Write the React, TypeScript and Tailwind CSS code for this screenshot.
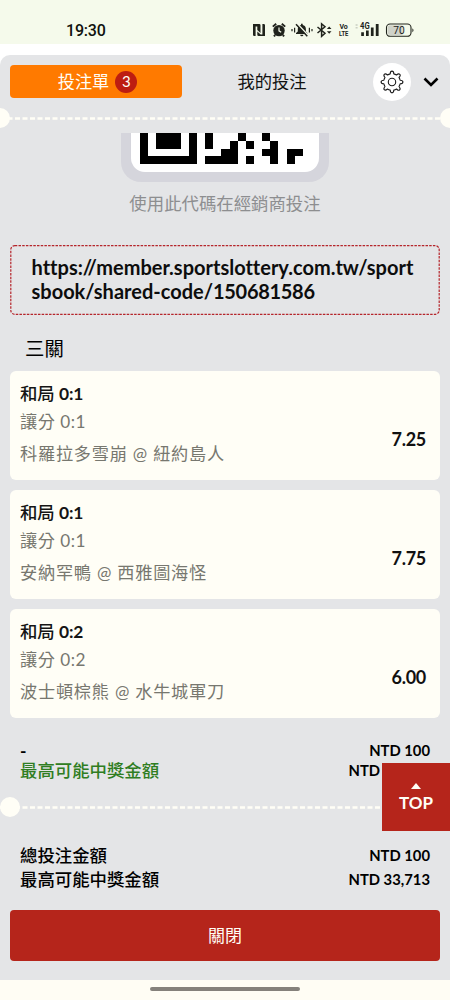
import { useState } from 'react'

interface Bet {
  id: number
  result: string
  score: string
  market: string
  match: string
  odds: string
}

const bets: Bet[] = [
  { id: 1, result: '和局', score: '0:1', market: '讓分 0:1', match: '科羅拉多雪崩 @ 紐約島人', odds: '7.25' },
  { id: 2, result: '和局', score: '0:1', market: '讓分 0:1', match: '安納罕鴨 @ 西雅圖海怪', odds: '7.75' },
  { id: 3, result: '和局', score: '0:2', market: '讓分 0:2', match: '波士頓棕熊 @ 水牛城軍刀', odds: '6.00' },
]

// last visible rows of the QR code, one character per module
const qrRows = [
  '#.###.#.#...#..#.....',
  '#.###.#.#..#.#..#....',
  '#.....#...##...##.##.',
  '#######.####.#..#.#..',
]

function StatusBar() {
  return (
    <div className="flex h-11 items-end justify-between bg-[#f5faeb] pl-[66px] pr-[35px] text-[#20231c]">
      <span className="mb-[1px] font-['Roboto'] text-[16px] font-medium leading-6 tracking-[-0.2px] text-[#10120e]">19:30</span>
      <svg width="163" height="20" viewBox="0 0 163 20" className="mb-[4px]" fill="currentColor">
        {/* nfc */}
        <path d="M1 4h6.2q1.3 0 1.3 1.3v7.6L5.3 9.9V6.4H3.6V16H2.3Q1 16 1 14.7zM13 16H6.6q-1.3 0-1.3-1.3v-3.2l3.4 2.9h1.7V4h1.3Q13 4 13 5.3z" />
        {/* alarm */}
        <circle cx="27" cy="10.6" r="5.7" />
        <path d="M20.8 6.6l3.4-2.9M33.2 6.6L29.8 3.7M23.2 15l-1.3 1.4M30.8 15l1.3 1.4" stroke="currentColor" strokeWidth="1.9" />
        <path d="M27 7.6v3.2l2.2 1.4" fill="none" stroke="#f5faeb" strokeWidth="1.2" />
        {/* muted bell */}
        <path d="M44 14h11.4v-1l-1.5-1.5V9c0-2.4-1.3-3.8-3.2-4.1V3.8H49v1.1c-1.9.3-3.2 1.7-3.2 4.1v2.5L44 13zM48.2 14.7h3.2a1.6 1.6 0 0 1-3.2 0z" />
        <path d="M45.2 3.8l11.3 12" stroke="#f5faeb" strokeWidth="1.8" />
        <path d="M44 4.2l11.3 12" stroke="currentColor" strokeWidth="1.5" />
        <path d="M40 9v2.2M42.6 7.8v4.6M57.4 7.8v4.6M60 9v2.2" stroke="currentColor" strokeWidth="1.2" />
        {/* bluetooth */}
        <path d="M65.5 7l7.5 6.3-3.4 3V3.8l3.4 3L65.5 13" fill="none" stroke="currentColor" strokeWidth="1.5" />
        <path d="M74.9 8.9l2.3-2.5 2.3 2.5zM74.9 11.2l2.3 2.5 2.3-2.5z" />
        <g fontFamily="Roboto" fontWeight="700">
          <text x="87.4" y="9.3" fontSize="7" textLength="8.4" lengthAdjust="spacingAndGlyphs">Vo</text>
          <text x="87" y="16.4" fontSize="7" textLength="9.4" lengthAdjust="spacingAndGlyphs">LTE</text>
          <text x="108" y="9.4" fontSize="8.4" textLength="9.6" lengthAdjust="spacingAndGlyphs">4G</text>
        </g>
        <path d="M103.6 4.2h2v1.5h-2zM103.6 6.9h2v1.5h-2z" opacity=".2" />
        <path d="M109.2 12.3h2.7V16h-2.7zM114 10.5h2.7V16H114zM118.9 7.5h2.7V16h-2.7zM123.8 4h2.8v12h-2.8z" />
        {/* battery */}
        <rect x="134.5" y="4" width="24.5" height="12.3" rx="3.6" fill="none" stroke="currentColor" strokeWidth="1.1" />
        <path d="M138.1 5.2h12.4v9.9h-12.4a2.5 2.5 0 0 1-2.5-2.5V7.7a2.5 2.5 0 0 1 2.5-2.5z" fill="#cfd2c9" />
        <path d="M160.4 8.2q2.2 2 0 4z" />
        <text x="147" y="13.8" textAnchor="middle" fontFamily="Roboto" fontSize="10.2">70</text>
      </svg>
    </div>
  )
}

function GearIcon() {
  return (
    <svg width="24" height="24" viewBox="0 0 24 24" fill="none" stroke="#1a1a1a" strokeWidth="1.1" strokeLinejoin="round">
      <path d="M10.2 3.9Q10.3 1.1 12 1.1T13.8 3.9Q15.3 4.2 16.5 5Q18.6 3.2 19.8 4.3T19 7.5Q19.8 8.7 20.1 10.2Q22.9 10.3 22.9 12T20.1 13.8Q19.8 15.3 19 16.5Q20.8 18.6 19.7 19.8T16.5 19Q15.3 19.8 13.8 20.1Q13.7 22.9 12 22.9T10.2 20.1Q8.7 19.8 7.5 19Q5.4 20.8 4.3 19.7T5 16.5Q4.2 15.3 3.9 13.8Q1.1 13.7 1.1 12T3.9 10.2Q4.2 8.7 5 7.5Q3.2 5.4 4.3 4.3T7.5 5Q8.7 4.2 10.2 3.9Z" />
      <circle cx="12" cy="12" r="3.7" />
    </svg>
  )
}

function DashedLine() {
  return (
    <svg width="100%" height="3">
      <line x1="0" y1="1.5" x2="100%" y2="1.5" stroke="#fffef6" strokeWidth="2.4" strokeDasharray="5 2.5" />
    </svg>
  )
}

function QrCode() {
  return (
    <div className="mx-auto h-[49px] w-[208px] rounded-b-[20px] bg-[#d5d5dc] px-[10px] pb-[10px]">
      <div className="h-full rounded-b-[14px] bg-white pl-[9px]">
        <svg width="171" height="31" viewBox="0 0 21 4" preserveAspectRatio="none" shapeRendering="crispEdges">
          {qrRows.map((row, y) =>
            row.split('').map((cell, x) =>
              cell === '#' ? <rect key={`${x}-${y}`} x={x} y={y} width="1" height="1" /> : null
            )
          )}
        </svg>
      </div>
    </div>
  )
}

function BetCard({ bet }: { bet: Bet }) {
  return (
    <div className="flex h-[109px] justify-between rounded-md bg-[#fffef6] pl-[10px] pr-[14px]">
      <div className="pt-[9px]">
        <p className="text-[17.4px] font-medium leading-7 tracking-[-0.1px] text-[#151515]">
          {bet.result} <span className="font-bold">{bet.score}</span>
        </p>
        <p className="text-[17.2px] leading-7 tracking-[0.5px] text-[#77776f]">{bet.market}</p>
        <p className="mt-1 text-[17.2px] leading-7 tracking-[0.76px] text-[#77776f]">{bet.match}</p>
      </div>
      <span className="mt-[56px] text-[18px] font-bold leading-6 tracking-[-0.3px] text-[#111]">{bet.odds}</span>
    </div>
  )
}

export default function App() {
  const [tab, setTab] = useState('slip')

  return (
    <div className="flex h-[1000px] w-[450px] flex-col overflow-hidden bg-white font-['Lato','Noto_Sans_CJK_TC',sans-serif] text-black">
      <StatusBar />

      <main className="mt-[11px] flex h-[925px] flex-col rounded-t-[10px] bg-[#e4e5e7]">
        <header className="flex h-[53px] items-center px-[10px]">
          <button
            onClick={() => setTab('slip')}
            aria-pressed={tab === 'slip'}
            className="flex h-[33px] w-[172px] items-center justify-center gap-[6px] rounded bg-[#ff7a00] pl-[3px] text-[17.2px] text-[#fffef6]"
          >
            <span>投注單</span>
            <span className="flex h-[22px] w-[22px] items-center justify-center rounded-full bg-[#bd1d11] text-[15px]">3</span>
          </button>
          <button
            onClick={() => setTab('mine')}
            aria-pressed={tab === 'mine'}
            className="w-[180px] text-center text-[17.3px] text-[#111]"
          >
            我的投注
          </button>
          <span className="ml-[11px] flex h-[38px] w-[38px] items-center justify-center rounded-full bg-white">
            <GearIcon />
          </span>
          <svg width="16" height="10" viewBox="0 0 16 10" fill="none" stroke="black" strokeWidth="2.6" className="ml-[12px]">
            <path d="M1.5 1.5L8 8l6.5-6.5" />
          </svg>
        </header>

        <div className="relative flex h-[20px] items-center">
          <DashedLine />
          <span className="absolute -left-[10px] top-0 h-5 w-5 rounded-full bg-[#fffef6]" />
          <span className="absolute -right-[10px] top-0 h-5 w-5 rounded-full bg-[#fffef6]" />
        </div>

        <section className="mt-[5px]">
          <QrCode />
          <p className="mt-[8px] text-center text-[17.4px] leading-7 text-[#8d8e90]">使用此代碼在經銷商投注</p>
        </section>

        <div className="relative mx-[10px] mt-[27px] h-[70px] break-all pl-[21.5px] pr-[20px] pt-[10px] text-[20px] font-bold leading-6 text-[#0d0d0d] [font-variant-ligatures:none]">
          <svg width="430" height="70" className="absolute left-0 top-0" fill="none">
            <rect x="0.8" y="0.7" width="428.4" height="68.6" rx="4" stroke="#b5252b" strokeWidth="1.2" strokeDasharray="2.5 1.2" />
          </svg>
          https://member.sportslottery.com.tw/sportsbook/shared-code/<span className="tracking-[-0.3px]">150681586</span>
        </div>

        <h2 className="ml-[25px] mt-[19px] text-[19.4px] leading-[30px]">三關</h2>

        <section className="mx-[10px] mt-[7px] flex flex-col gap-[10px]">
          {bets.map((bet) => (
            <BetCard key={bet.id} bet={bet} />
          ))}
        </section>

        <div className="mt-[22px] flex h-10 justify-between px-5 font-medium leading-5">
          <div className="pt-px text-[17.4px]">
            <p className="font-bold">-</p>
            <p className="text-[#2f7d22]">最高可能中獎金額</p>
          </div>
          <div className="text-right text-[14.8px] font-bold">
            <p>NTD 100</p>
            <p>NTD 33,713</p>
          </div>
        </div>

        <div className="relative mt-[17px] flex h-5 items-center">
          <DashedLine />
          <span className="absolute left-0 top-0 h-5 w-5 rounded-full bg-[#fffef6]" />
          <button className="absolute -top-[34px] right-0 flex h-[68px] w-[68px] flex-col items-center bg-[#b5251b] pt-[20px] text-[17px] font-bold text-[#fffef6]">
            <svg width="10" height="6" viewBox="0 0 10 6" fill="currentColor">
              <path d="M5 0l5 6H0z" />
            </svg>
            <span className="mt-[4px] leading-5">TOP</span>
          </button>
        </div>

        <div className="mt-[26px] flex flex-col px-5 font-medium leading-6">
          <div className="flex justify-between">
            <span className="pt-px text-[17.4px] leading-[23px]">總投注金額</span>
            <span className="text-[14.8px] font-bold">NTD 100</span>
          </div>
          <div className="flex justify-between">
            <span className="pt-px text-[17.4px] leading-[23px]">最高可能中獎金額</span>
            <span className="text-[14.8px] font-bold">NTD 33,713</span>
          </div>
        </div>

        <button className="mx-[10px] mt-[19px] h-[51px] rounded bg-[#b5251b] text-[17px] text-[#fffef6]">關閉</button>
      </main>

      <footer className="flex h-5 justify-center bg-[#fffdf4] pt-[7px]">
        <div className="h-[4px] w-[150px] rounded-full bg-[#85817b]" />
      </footer>
    </div>
  )
}
